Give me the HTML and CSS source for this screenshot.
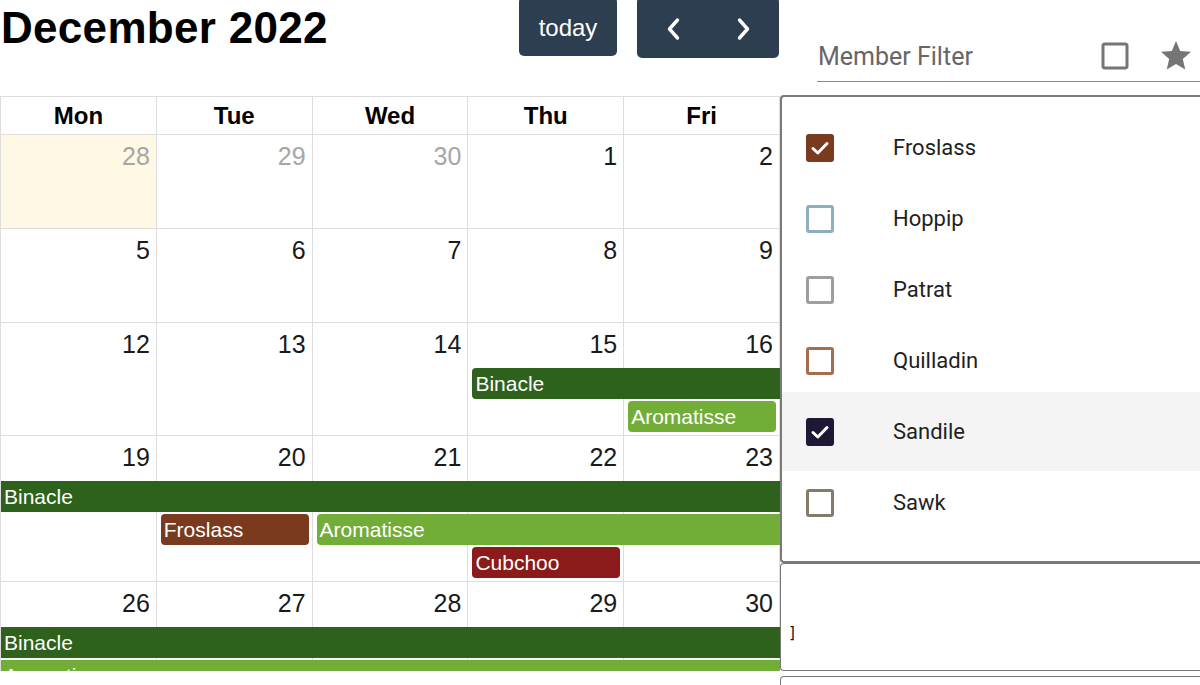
FILE: index.html
```html
<!DOCTYPE html>
<html lang="en">
<head>
<meta charset="utf-8">
<title>Calendar</title>
<link rel="stylesheet" href="styles.css">
</head>
<body>
<div class="page">
  <main class="cal">
    <div class="toolbar">
      <h2 class="title">December 2022</h2>
      <div class="actions">
        <button class="btn today">today</button>
        <div class="btn-group">
          <button class="btn nav nav-prev" aria-label="prev">
            <svg class="chev" viewBox="0 0 16 24" width="16" height="24"><polyline points="12.5,3 4.5,12 12.5,21"/></svg>
          </button>
          <button class="btn nav nav-next" aria-label="next">
            <svg class="chev" viewBox="0 0 16 24" width="16" height="24"><polyline points="3.5,3 11.5,12 3.5,21"/></svg>
          </button>
        </div>
      </div>
    </div>

    <div class="grid">
      <div class="head">
        <div class="hcell">Mon</div>
        <div class="hcell">Tue</div>
        <div class="hcell">Wed</div>
        <div class="hcell">Thu</div>
        <div class="hcell">Fri</div>
      </div>

      <div class="week">
        <div class="day other is-today">28</div>
        <div class="day other">29</div>
        <div class="day other">30</div>
        <div class="day">1</div>
        <div class="day">2</div>
      </div>

      <div class="week">
        <div class="day">5</div>
        <div class="day">6</div>
        <div class="day">7</div>
        <div class="day">8</div>
        <div class="day">9</div>
      </div>

      <div class="week w2">
        <div class="day">12</div>
        <div class="day">13</div>
        <div class="day">14</div>
        <div class="day">15</div>
        <div class="day">16</div>
        <div class="ev binacle g4-6 r2 cr">Binacle</div>
        <div class="ev aroma g5 r3">Aromatisse</div>
      </div>

      <div class="week w3">
        <div class="day">19</div>
        <div class="day">20</div>
        <div class="day">21</div>
        <div class="day">22</div>
        <div class="day">23</div>
        <div class="ev binacle g1-6 r2 cl cr">Binacle</div>
        <div class="ev froslass g2 r3">Froslass</div>
        <div class="ev aroma g3-6 r3 cr">Aromatisse</div>
        <div class="ev cubchoo g4 r4">Cubchoo</div>
      </div>

      <div class="week w2">
        <div class="day">26</div>
        <div class="day">27</div>
        <div class="day">28</div>
        <div class="day">29</div>
        <div class="day">30</div>
        <div class="ev binacle g1-6 r2 cl cr">Binacle</div>
        <div class="ev aroma g1-6 r3 cl cr">Aromatisse</div>
      </div>
    </div>
  </main>

  <aside class="panel">
    <div class="filter">
      <div class="field">
        <span class="field-label">Member Filter</span>
        <svg class="icon" viewBox="0 0 24 24"><path d="M19 5v14H5V5h14m0-2H5c-1.1 0-2 .9-2 2v14c0 1.1.9 2 2 2h14c1.1 0 2-.9 2-2V5c0-1.1-.9-2-2-2z"/></svg>
        <svg class="icon icon-star" viewBox="0 0 24 24"><path d="M12 17.27L18.18 21l-1.64-7.03L22 9.24l-7.19-.61L12 2 9.19 8.63 2 9.24l5.46 4.73L5.82 21z"/></svg>
      </div>
    </div>

    <div class="list">
      <div class="item">
        <span class="cb cb-froslass checked"><svg viewBox="0 0 22 22" width="22" height="22"><polyline points="4,11.5 8.8,16 18,6.5"/></svg></span>
        <span class="name">Froslass</span>
      </div>
      <div class="item">
        <span class="cb cb-hoppip"></span>
        <span class="name">Hoppip</span>
      </div>
      <div class="item">
        <span class="cb cb-patrat"></span>
        <span class="name">Patrat</span>
      </div>
      <div class="item">
        <span class="cb cb-quilladin"></span>
        <span class="name">Quilladin</span>
      </div>
      <div class="item hl">
        <span class="cb cb-sandile checked"><svg viewBox="0 0 22 22" width="22" height="22"><polyline points="4,11.5 8.8,16 18,6.5"/></svg></span>
        <span class="name">Sandile</span>
      </div>
      <div class="item">
        <span class="cb cb-sawk"></span>
        <span class="name">Sawk</span>
      </div>
    </div>

    <div class="json"><pre class="json-text">]</pre></div>
    <div class="box3"></div>
  </aside>
</div>
</body>
</html>
```

FILE: styles.css
```css
* { box-sizing: border-box; }

html, body {
  margin: 0;
  padding: 0;
  background: #fff;
  overflow: hidden;
}

body {
  width: 1200px;
  height: 685px;
  font-family: "Liberation Sans", Arial, sans-serif;
  color: #000;
}

.page {
  display: flex;
  align-items: flex-start;
}

/* ---------- calendar ---------- */
.cal {
  width: 780px;
  flex: none;
}

.toolbar {
  height: 96px;
  display: flex;
  align-items: flex-start;
}

.title {
  margin: 0;
  padding-top: 6px;
  padding-left: 1px;
  font-size: 44px;
  line-height: 44px;
  font-weight: 700;
  letter-spacing: 0.3px;
}

.actions {
  margin-left: auto;
  margin-right: 1px;
  margin-top: -3px;
  display: flex;
  align-items: flex-start;
  gap: 20px;
}

.btn {
  background: #2c3e50;
  border: 0;
  margin: 0;
  padding: 0;
  color: #fff;
  font-family: "Liberation Sans", Arial, sans-serif;
  border-radius: 5px;
}

.today {
  width: 98px;
  height: 59px;
  font-size: 24px;
  padding-top: 3px;
}

.btn-group { display: flex; }

.nav {
  width: 71px;
  height: 61px;
  display: flex;
  align-items: center;
  justify-content: center;
  padding-top: 3px;
}

.nav-prev { border-radius: 5px 0 0 5px; padding-left: 1px; }
.nav-next { border-radius: 0 5px 5px 0; }

.chev {
  display: block;
  fill: none;
  stroke: #fff;
  stroke-width: 3.4;
  stroke-linecap: round;
  stroke-linejoin: round;
}

.grid {
  height: 575px;
  overflow: hidden;
  border-left: 1px solid #ddd;
}

.head {
  display: grid;
  grid-template-columns: repeat(5, 1fr);
  border-top: 1px solid #ddd;
}

.hcell {
  height: 38px;
  line-height: 37px;
  border-right: 1px solid #ddd;
  border-bottom: 1px solid #ddd;
  text-align: center;
  font-weight: 700;
  font-size: 24px;
}

.week {
  display: grid;
  grid-template-columns: repeat(5, 1fr);
  grid-template-rows: 43px minmax(2px, 1fr);
  row-gap: 2px;
  min-height: 94px;
}

.w2 { grid-template-rows: 43px 31px 31px minmax(2px, 1fr); }
.w3 { grid-template-rows: 43px 31px 31px 31px minmax(2px, 1fr); }

.day {
  grid-row: 1 / -1;
  border-right: 1px solid #ddd;
  border-bottom: 1px solid #ddd;
  text-align: right;
  padding: 6px 6px 0 0;
  font-size: 25px;
  line-height: 30px;
  color: #1a1a1a;
}

.day:nth-child(1) { grid-column: 1; }
.day:nth-child(2) { grid-column: 2; }
.day:nth-child(3) { grid-column: 3; }
.day:nth-child(4) { grid-column: 4; }
.day:nth-child(5) { grid-column: 5; }

.other { color: #a6a6a6; }
.is-today { background: #fef8e4; }

.ev {
  height: 31px;
  line-height: 31px;
  font-size: 21px;
  color: #fff;
  padding-left: 3px;
  margin: 0 4px;
  border-radius: 4px;
  white-space: nowrap;
  overflow: hidden;
}

.cl {
  margin-left: 0;
  border-top-left-radius: 0;
  border-bottom-left-radius: 0;
}

.cr {
  margin-right: 0;
  border-top-right-radius: 0;
  border-bottom-right-radius: 0;
}

.binacle  { background: #2d611c; }
.aroma    { background: #72ad38; }
.froslass { background: #7a3a1e; }
.cubchoo  { background: #8b1a1a; }

.g1-6 { grid-column: 1 / 6; }
.g2   { grid-column: 2; }
.g3-6 { grid-column: 3 / 6; }
.g4   { grid-column: 4; }
.g4-6 { grid-column: 4 / 6; }
.g5   { grid-column: 5; }

.r2 { grid-row: 2; }
.r3 { grid-row: 3; }
.r4 { grid-row: 4; }

/* ---------- side panel ---------- */
.panel {
  flex: 1;
  min-width: 0;
  font-family: Roboto, "Noto Sans", sans-serif;
}

.filter {
  height: 95px;
  padding: 31px 0 0 37px;
}

.field {
  height: 51px;
  border-bottom: 1px solid #8a8a8a;
  display: flex;
  align-items: center;
  padding-right: 6px;
}

.field-label {
  flex: 1;
  padding-left: 1px;
  font-size: 25px;
  color: #666;
}

.icon {
  width: 36px;
  height: 36px;
  display: block;
  flex: none;
  fill: #757575;
}

.icon + .icon { margin-left: 25px; }

.list {
  height: 468px;
  border: 2px solid #7a7a7a;
  border-right: 0;
  border-radius: 4px 0 0 4px;
  padding-top: 15px;
}

.item {
  height: 71px;
  display: flex;
  align-items: center;
  padding-left: 24px;
  font-size: 22px;
  color: #1f1f1f;
}

.item.hl {
  background: #f4f4f4;
  box-shadow: 0 4px 0 #f4f4f4, 0 -4px 0 #f4f4f4;
}

.cb {
  width: 28px;
  height: 28px;
  flex: none;
  border: 3px solid #999;
  border-radius: 3px;
  margin-right: 59px;
  display: flex;
  align-items: center;
  justify-content: center;
}

.cb svg {
  display: block;
  fill: none;
  stroke: #fff;
  stroke-width: 3;
  stroke-linecap: round;
  stroke-linejoin: round;
}

.cb-froslass  { border-color: #7a3a1e; background: #7a3a1e; }
.cb-hoppip    { border-color: #8db0c1; }
.cb-patrat    { border-color: #9e9e9e; }
.cb-quilladin { border-color: #a56c4d; }
.cb-sandile   { border-color: #1f1834; background: #1f1834; }
.cb-sawk      { border-color: #857b6a; }

.json {
  height: 108px;
  border: 1px solid #777;
  border-right: 0;
  border-radius: 4px 0 0 4px;
  padding: 60px 0 0 7px;
}

.json-text {
  margin: 0;
  font-family: "DejaVu Sans Mono", "Liberation Mono", monospace;
  font-size: 15px;
  line-height: 18px;
  color: #111;
}

.box3 {
  height: 30px;
  margin-top: 5px;
  border: 1px solid #777;
  border-right: 0;
  border-bottom: 0;
  border-radius: 4px 0 0 0;
}
```
